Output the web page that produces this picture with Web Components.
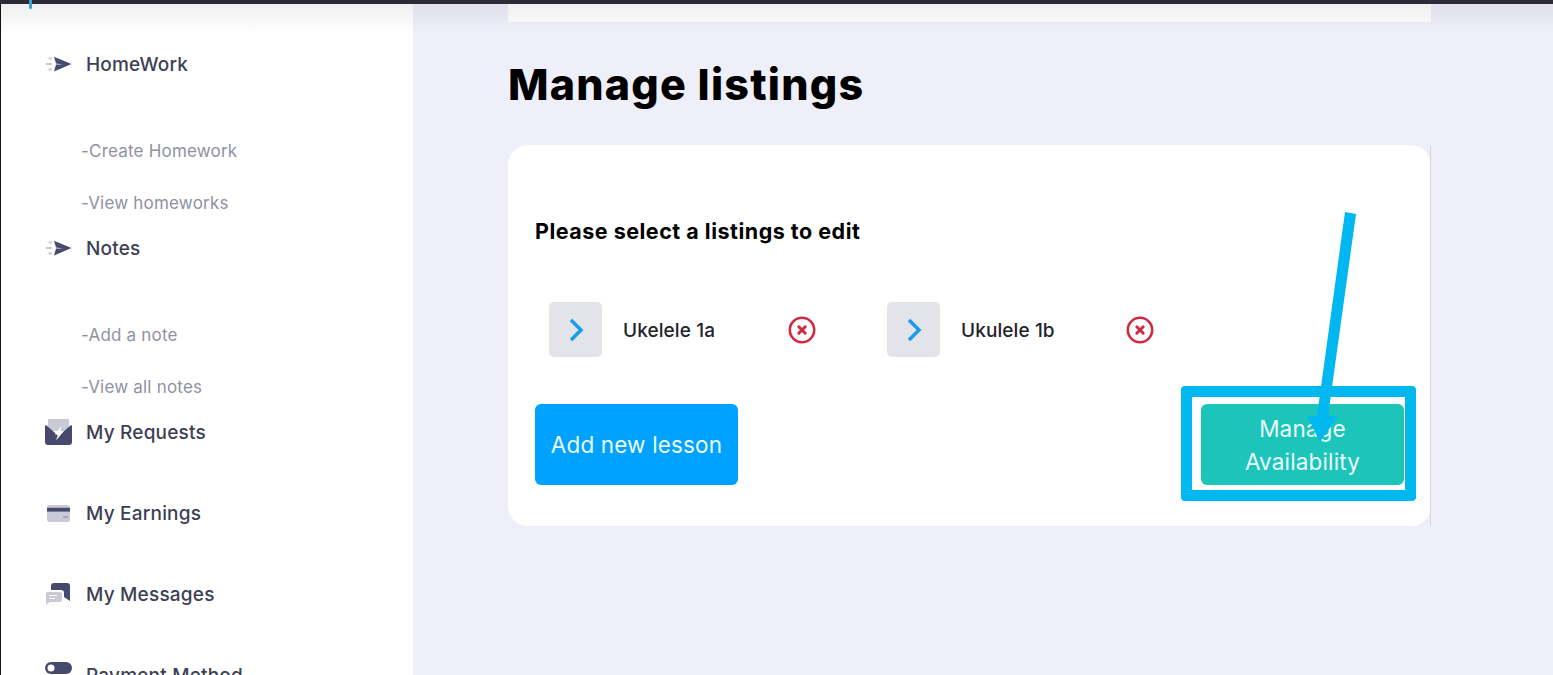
<!DOCTYPE html>
<html lang="en"><head><meta charset="utf-8"><title>Manage listings</title>
<style>
html,body{margin:0;padding:0;height:675px;overflow:hidden;background:#eeeff9}
body{font-family:Inter,"Noto Sans","Liberation Sans",sans-serif}
</style></head><body>
<app-shell>
  <side-nav slot="side">
    <nav-item label="HomeWork" icon="send" pt="40" pb="40"></nav-item>
    <sub-item label="-Create Homework"></sub-item>
    <sub-item label="-View homeworks"></sub-item>
    <nav-item label="Notes" icon="send" pb="40"></nav-item>
    <sub-item label="-Add a note"></sub-item>
    <sub-item label="-View all notes"></sub-item>
    <nav-item label="My Requests" icon="req"></nav-item>
    <nav-item label="My Earnings" icon="card"></nav-item>
    <nav-item label="My Messages" icon="msg"></nav-item>
    <nav-item label="Payment Method" icon="pay"></nav-item>
  </side-nav>
  <manage-page slot="main" heading="Manage listings">
    <listing-card prompt="Please select a listings to edit">
      <listing-item slot="items" label="Ukelele 1a"></listing-item>
      <listing-item slot="items" label="Ukulele 1b"></listing-item>
      <action-button slot="left" bg="#00a2ff">Add new lesson</action-button>
      <action-button slot="right" bg="#1cc4ba">Manage<br>Availability</action-button>
    </listing-card>
  </manage-page>
  <call-out slot="over"></call-out>
</app-shell>
<script>
function def(name, css, html, init){
  customElements.define(name, class extends HTMLElement{
    connectedCallback(){
      if(this.shadowRoot) return;
      const r=this.attachShadow({mode:'open'});
      r.innerHTML='<style>'+css+'</style>'+(typeof html==='function'?html(this):html);
      if(init) init(this,r);
    }
  });
}
const NAVY='#474a6c',PALE='#c9cad6';
const ICONS={
 send:`<svg width="27" height="16" viewBox="0 0 27 16"><path d="M9 .8 26.500 8 9 15.500 11 8.600H18L11 7.400z" fill="${NAVY}"/><path d="M3.500 2.500H7M1 8H7M3.500 13.500H7" stroke="${PALE}" stroke-width="2" fill="none"/></svg>`,
 req:`<svg width="27" height="26" viewBox="0 0 27 26"><path d="M3 0H24V12H3z" fill="${PALE}"/><path d="M1 6 13.500 17 26 6Q27 6 27 7.500V23Q27 26 24 26H3Q0 26 0 23V7.500Q0 6 1 6z" fill="${NAVY}"/><path d="M17 6.500 9.800 15.500H13L11 21.500 18.500 12.500H14.800z" fill="#fff"/></svg>`,
 card:`<svg width="23" height="17" viewBox="0 0 23 17"><rect width="23" height="17" rx="2.500" fill="${PALE}"/><rect y="2.800" width="23" height="3.800" fill="${NAVY}"/><rect x="16" y="11" width="5" height="2" fill="#a5a7ba"/></svg>`,
 msg:`<svg width="25" height="22" viewBox="0 0 25 22"><path d="M5 3Q5 0 8 0H21Q24 0 24 3V18L18 14V10Q18 7 15 7H5z" fill="${NAVY}"/><path d="M2 9H14Q16 9 16 11V17Q16 19 14 19H4L0 21.500V11Q0 9 2 9z" fill="${PALE}"/><path d="M3.500 12.500H11M3.500 15.500H9" stroke="#fff" stroke-width="1.200"/></svg>`,
 pay:`<svg width="27" height="26" viewBox="0 0 27 26"><rect width="27" height="12" rx="6" fill="${NAVY}"/><circle cx="6" cy="6" r="3.500" fill="#fff"/></svg>`
};
def('app-shell',
 ':host{display:flex;flex-direction:column;position:relative;width:1553px;height:675px;overflow:hidden;background:#eeeff9}'+
 '.bar{height:4px;flex:none;background:#2b2a35}'+
 '.body{display:flex;flex:1;min-height:0}'+
 '.shade{position:absolute;left:0;right:0;top:4px;height:30px;background:linear-gradient(rgba(40,40,60,.075),rgba(40,40,60,0));pointer-events:none}'+
 '.tick{position:absolute;left:29px;top:0;width:3px;height:9px;background:#3f9fd0;border-radius:0 0 2px 2px}',
 '<div class="bar"></div><div class="body"><slot name="side"></slot><slot name="main"></slot></div><div class="shade"></div><div class="tick"></div><slot name="over"></slot>');
def('side-nav',
 ':host{display:block;flex:none;width:412px;height:671px;overflow:hidden;background:#fff;border-left:1px solid #111}',
 '<slot></slot>');
def('nav-item',
 ':host{display:block}.r{display:flex;align-items:center;height:40px;padding-left:44px}'+
 '.i{width:27px;height:26px;flex:none;display:flex;justify-content:center;align-items:center}'+
 '.t{margin-left:14px;padding-top:2px;white-space:nowrap;font:500 19px/26px Inter,"Noto Sans",sans-serif;color:#3d3f55;letter-spacing:.2px}',
 h=>`<div class="r" style="margin-top:${h.getAttribute('pt')||0}px;margin-bottom:${h.getAttribute('pb')||41}px"><span class="i">${ICONS[h.getAttribute('icon')]}</span><span class="t">${h.getAttribute('label')}</span></div>`);
def('sub-item',
 ':host{display:block;height:52px;padding-left:80px;font:400 17px/54px Inter,"Noto Sans",sans-serif;color:#8f91a3;letter-spacing:.2px}',
 h=>h.getAttribute('label'));
def('manage-page',
 ':host{display:block;flex:1;min-width:0;padding:0 122px 0 95px}'+
 '.top{height:18px;background:#fff}'+
 'h1{margin:0;height:123px;box-sizing:border-box;padding:36px 0 0;font:800 43px/52px Inter,"Noto Sans",sans-serif;color:#000;letter-spacing:1.2px}',
 h=>`<div class="top"></div><h1>${h.getAttribute('heading')}</h1><slot></slot>`);
def('listing-card',
 ':host{display:block;position:relative;box-sizing:border-box;height:381px;background:#fff;border-radius:20px;padding:71px 27px 0}'+
 ':host::after{content:"";position:absolute;right:0;top:0;bottom:0;width:1px;background:#d5d6df}'+
 'h2{margin:0;font:700 21.500px/30px Inter,"Noto Sans",sans-serif;color:#000;letter-spacing:.5px}'+
 '.items{display:flex;margin-top:56px;padding-left:14px}'+
 '.acts{display:flex;justify-content:space-between;margin-top:47px}',
 h=>`<h2>${h.getAttribute('prompt')}</h2><div class="items"><slot name="items"></slot></div><div class="acts"><slot name="left"></slot><slot name="right"></slot></div>`);
def('listing-item',
 ':host{display:flex;align-items:center;width:338px;height:55px}'+
 '.chip{width:53px;height:55px;flex:none;border-radius:5px;background:#e2e4ea;display:flex;align-items:center;justify-content:center}'+
 '.t{width:165px;flex:none;margin-left:21px;padding-top:2px;font:500 19px/26px Inter,"Noto Sans",sans-serif;color:#22232b;letter-spacing:.1px}',
 h=>`<div class="chip"><svg width="16" height="24" viewBox="0 0 16 24"><path d="M3 2 13 12 3 22" fill="none" stroke="#1a9bea" stroke-width="3.500"/></svg></div><span class="t">${h.getAttribute('label')}</span><svg width="28" height="28" viewBox="0 0 28 28"><circle cx="14" cy="14" r="12.200" fill="none" stroke="#cf2a40" stroke-width="2.600"/><path d="M10.800 10.800 17.200 17.200M17.200 10.800 10.800 17.200" stroke="#cf2a40" stroke-width="3" stroke-linecap="round"/></svg>`);
def('action-button',
 ':host{display:flex;align-items:center;justify-content:center;box-sizing:border-box;width:203px;height:81px;border-radius:6px;color:#eafcfb;text-align:center;font:400 22.500px/33px Inter,"Noto Sans",sans-serif;letter-spacing:.15px}',
 '<slot></slot>',
 h=>{h.style.background=h.getAttribute('bg')});
def('call-out',
 ':host{position:absolute;left:0;top:0;width:1553px;height:675px;pointer-events:none}'+
 '.box{position:absolute;left:1181px;top:386px;width:235px;height:115px;box-sizing:border-box;border:11px solid #00b7f0;border-radius:4px}'+
 'svg{position:absolute;left:0;top:0}',
 '<div class="box"></div><svg width="1553" height="675" viewBox="0 0 1553 675"><path d="M1345 212 1356 214 1328 416H1338L1320 442 1307 416H1317z" fill="#00b7f0"/></svg>');
</script>
</body></html>
